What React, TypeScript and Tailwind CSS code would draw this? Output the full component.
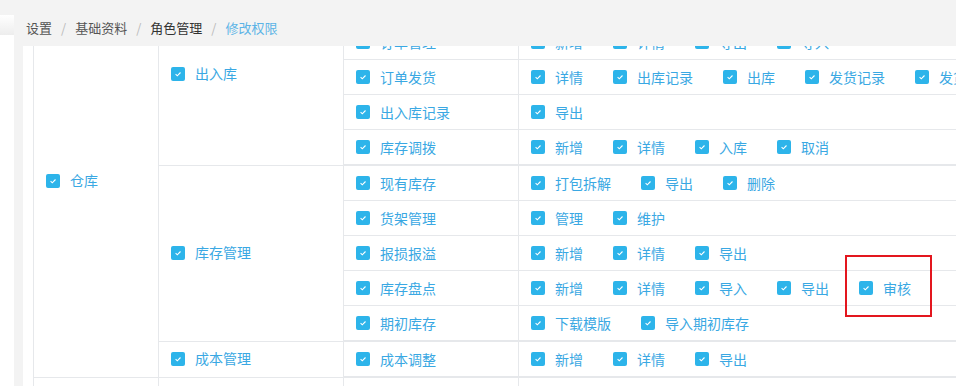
import React from 'react';

type Row = { name: string; items: string[]; tall?: boolean };
type Group = { name: string; rows: Row[]; last?: boolean };

// first row sits above the fold (scrolled out), so it is left empty
const groups: Group[] = [
    {
        name: '出入库',
        rows: [
            { name: '', items: [], tall: true },
            { name: '订单管理', items: ['新增', '详情', '导出', '导入'] },
            { name: '订单发货', items: ['详情', '出库记录', '出库', '发货记录', '发货详情'] },
            { name: '出入库记录', items: ['导出'] },
            { name: '库存调拨', items: ['新增', '详情', '入库', '取消'] },
        ],
    },
    {
        name: '库存管理',
        rows: [
            { name: '现有库存', items: ['打包拆解', '导出', '删除'] },
            { name: '货架管理', items: ['管理', '维护'] },
            { name: '报损报溢', items: ['新增', '详情', '导出'] },
            { name: '库存盘点', items: ['新增', '详情', '导入', '导出', '审核'] },
            { name: '期初库存', items: ['下载模版', '导入期初库存'] },
        ],
    },
    {
        name: '成本管理',
        last: true,
        rows: [{ name: '成本调整', items: ['新增', '详情', '导出'] }],
    },
];

function Check() {
    return (
        <span className="w-[14px] h-[14px] rounded-[2px] bg-[#2db4ea] flex items-center justify-center shrink-0">
            <svg width="10" height="10" viewBox="0 0 10 10">
                <path d="M2.6 5.1 L4.3 6.8 L7.5 3.5" fill="none" stroke="white" strokeWidth="1.1" />
            </svg>
        </span>
    );
}

function Item({ label, spaced = true }: { label: string; spaced?: boolean }) {
    return (
        <div className={`flex items-center gap-[10px] shrink-0 whitespace-nowrap ${spaced ? 'mr-[30px]' : ''}`}>
            <Check />
            <span>{label}</span>
        </div>
    );
}

export default function App() {
    return (
        <div className="relative w-[956px] h-[386px] overflow-hidden flex bg-[#f3f3f3] font-['Noto_Sans_CJK_SC','Noto_Sans',sans-serif]">
            {/* sidebar edge */}
            <div className="w-[14px] flex flex-col shrink-0">
                <div className="h-[15px] bg-[#f3f3f3]" />
                <div className="h-[20px] bg-gradient-to-b from-white to-[#ededed]" />
                <div className="flex-1 bg-white" />
            </div>

            <div className="flex-1 flex flex-col pl-[9px] min-w-0">
                {/* Breadcrumb */}
                <div className="h-[46px] shrink-0 flex items-center pt-[10px] pl-[3px] text-[13px]">
                    <span className="text-[#555]">设置</span>
                    <span className="mx-[9px] text-[#bbb]">/</span>
                    <span className="text-[#555]">基础资料</span>
                    <span className="mx-[9px] text-[#bbb]">/</span>
                    <span className="text-[#333]">角色管理</span>
                    <span className="mx-[9px] text-[#bbb]">/</span>
                    <span className="text-[#5cb3e6]">修改权限</span>
                </div>

                {/* Permission table */}
                <div className="flex-1 bg-white overflow-hidden pl-[10px]">
                    <div className="mt-[-62px] w-[1100px] text-[14px] text-[#3aa8e3]">
                        <div className="flex border-b border-[#e6e8eb]">
                            <div className="w-[126px] shrink-0 border-l border-r border-[#e6e8eb] pl-3 flex items-center">
                                <Item label="仓库" spaced={false} />
                            </div>
                            <div className="flex-1 flex flex-col">
                                {groups.map((g) => (
                                    <div key={g.name} className={`flex ${g.last ? '' : 'border-b border-[#e6e8eb]'}`}>
                                        <div className="w-[185px] shrink-0 border-r border-[#e6e8eb] pl-3 pb-[2px] flex items-center">
                                            <Item label={g.name} spaced={false} />
                                        </div>
                                        <div className="flex-1 flex flex-col">
                                            {g.rows.map((r, i) => (
                                                <div
                                                    key={i}
                                                    className={`flex border-b border-[#e6e8eb] ${r.tall ? 'h-[41px]' : 'h-[35px]'}`}
                                                >
                                                    <div className="w-[175px] shrink-0 border-r border-[#e6e8eb] pl-3 flex items-center">
                                                        {r.name && <Item label={r.name} spaced={false} />}
                                                    </div>
                                                    <div className="flex-1 pl-3 flex items-center overflow-hidden">
                                                        {r.items.map((it) => (
                                                            <Item key={it} label={it} />
                                                        ))}
                                                    </div>
                                                </div>
                                            ))}
                                        </div>
                                    </div>
                                ))}
                            </div>
                        </div>

                        {/* next module, cut off */}
                        <div className="flex h-[40px]">
                            <div className="w-[126px] shrink-0 border-l border-r border-[#e6e8eb]" />
                            <div className="w-[185px] shrink-0 border-r border-[#e6e8eb]" />
                            <div className="w-[175px] shrink-0 border-r border-[#e6e8eb]" />
                            <div className="flex-1" />
                        </div>
                    </div>
                </div>
            </div>

            {/* annotation */}
            <div className="absolute left-[845px] top-[255px] w-[87px] h-[62px] border-2 border-[#e3161e]" />
        </div>
    );
}
